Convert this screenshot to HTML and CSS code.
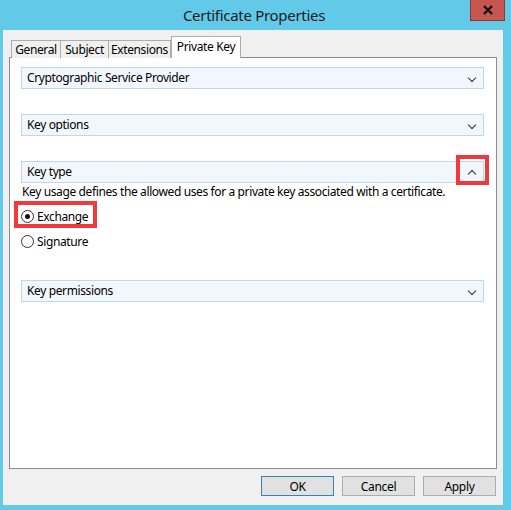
FILE: index.html
```html
<!DOCTYPE html>
<html lang="en">
<head>
  <meta charset="UTF-8">
  <title>Certificate Properties</title>
  <link rel="stylesheet" href="styles.css">
</head>
<body>
  <div class="window">
    <div class="titlebar">
      <span class="title">Certificate Properties</span>
      <div class="close">
        <svg width="12" height="10" viewBox="0 0 12 10"><path d="M2 1 L10 9 M10 1 L2 9" stroke="#111" stroke-width="2.4"/></svg>
      </div>
    </div>
    <div class="client">
      <div class="tabs">
        <div class="tab t-general">General</div>
        <div class="tab t-subject">Subject</div>
        <div class="tab t-ext">Extensions</div>
        <div class="tab active">Private Key</div>
      </div>
      <div class="panel">
        <div class="section">
          <div class="section-head">Cryptographic Service Provider <span class="chev down"></span></div>
        </div>
        <div class="section">
          <div class="section-head">Key options <span class="chev down"></span></div>
        </div>
        <div class="section open">
          <div class="section-head">Key type <span class="chev up"></span><span class="mark mark-chev"></span></div>
          <p class="desc">Key usage defines the allowed uses for a private key associated with a certificate.</p>
          <div class="radio checked">Exchange<span class="mark mark-radio"></span></div>
          <div class="radio">Signature</div>
        </div>
        <div class="section">
          <div class="section-head">Key permissions <span class="chev down"></span></div>
        </div>
      </div>
      <div class="buttons">
        <button class="btn default">OK</button>
        <button class="btn">Cancel</button>
        <button class="btn">Apply</button>
      </div>
    </div>
  </div>
</body>
</html>
```

FILE: styles.css
```css
body { margin: 0; font-family: "Noto Sans", sans-serif; font-size: 12px; letter-spacing: -0.38px; color: #000; }
.window { width: 511px; height: 510px; background: #63c9e9; display: flex; flex-direction: column; box-sizing: border-box; padding: 0 8px 5px 3px; }
.titlebar { height: 30px; position: relative; display: flex; justify-content: center; align-items: center; }
.title { font-size: 15px; letter-spacing: -0.3px; color: #1c1c1c; margin-left: 2px; margin-top: -1px; }
.close { position: absolute; right: -2px; top: 0; width: 33px; height: 20px; background: #c75550; border: 1px solid #8a3a36; border-top: none; display: flex; align-items: center; justify-content: center; }
.client { flex: 1; background: #f0f0f0; display: flex; flex-direction: column; padding: 7px 6px 0 6px; }
.tabs { display: flex; align-items: flex-end; height: 21px; padding-left: 2px; position: relative; z-index: 1; margin-bottom: -1px; }
.tab { height: 17px; line-height: 17px; box-sizing: content-box; text-align: center; border: 1px solid #adadad; border-bottom: none; border-right: none; background: #f0f0f0; }
.t-general { width: 48px; }
.t-subject { width: 47px; }
.t-ext { width: 61px; border-right: 1px solid #adadad; }
.tab.active { width: 68px; height: 21px; line-height: 19px; background: #fff; border: 1px solid #adadad; border-bottom: none; }
.panel { height: 412px; box-sizing: border-box; background: #fff; border: 1px solid #898c95; padding: 9px 12px 0 11px; }
.section { margin-bottom: 25px; position: relative; }
.section.open { margin-bottom: 26px; }
.section-head { height: 20px; line-height: 20px; background: #f2f7fd; border: 1px solid #bcd6f6; padding-left: 5px; display: flex; align-items: center; position: relative; }
.chev { position: absolute; right: 8px; top: 7px; width: 5px; height: 5px; border-right: 1.5px solid #333; border-bottom: 1.5px solid #333; transform: rotate(45deg); }
.chev.up { top: 9px; transform: rotate(225deg); }
.desc { margin: 0 0 0 1px; line-height: 17px; }
.radio { height: 25px; display: flex; align-items: center; padding-left: 16px; position: relative; }
.radio::before { content: ""; position: absolute; left: 0; top: 6px; width: 11px; height: 11px; border: 1px solid #333; border-radius: 50%; background: #fff; }
.radio.checked::after { content: ""; position: absolute; left: 4px; top: 10px; width: 5px; height: 5px; border-radius: 50%; background: #111; }
.radio.checked { margin-top: 4px; }
.mark { position: absolute; border: 4px solid #ef3a3d; }
.mark-chev { right: -6px; top: -7px; width: 25px; height: 22px; }
.mark-radio { left: -7px; top: -3px; width: 75px; height: 19px; }
.buttons { display: flex; justify-content: flex-end; gap: 8px; padding: 7px 1px 0 0; }
.btn { width: 73px; height: 20px; font-family: "Noto Sans", sans-serif; font-size: 12px; letter-spacing: -0.3px; background: #e1e1e1; border: 1px solid #adadad; padding: 0; margin: 0; color: #000; }
.btn.default { border-color: #3c7fb1; }
```
